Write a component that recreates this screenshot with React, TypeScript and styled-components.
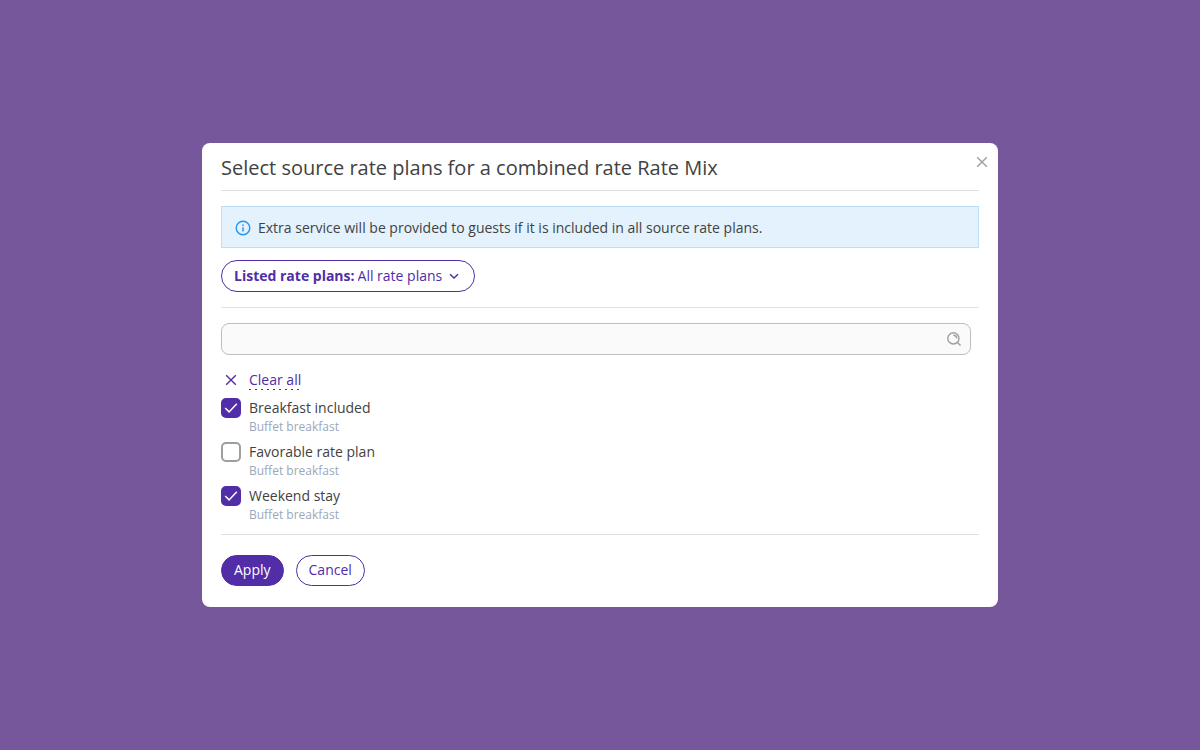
import React, { useState } from "react";
import styled, { createGlobalStyle } from "styled-components";

const PURPLE = "#512da8";
const TEXT = "#424242";

const GlobalStyle = createGlobalStyle`
  *, *::before, *::after { box-sizing: border-box; }
  body {
    margin: 0;
    background: #76579c;
    color: ${TEXT};
    font: 14px/20px "Open Sans", "Noto Sans", sans-serif;
  }
  button, input, select { font: inherit; color: inherit; }
`;

const Backdrop = styled.main`
  display: flex;
  align-items: center;
  justify-content: center;
  min-height: 100vh;
  padding: 16px;
`;

const Dialog = styled.section`
  position: relative;
  width: 100%;
  max-width: 796px;
  padding: 0 19px 21px;
  background: #fff;
  border-radius: 8px;
`;

const Title = styled.h1`
  margin: 0;
  padding: 11px 0 8px;
  font-size: 20px;
  font-weight: 400;
  line-height: 28px;
`;

const CloseButton = styled.button`
  position: absolute;
  top: 4px;
  right: 1px;
  display: flex;
  padding: 5px;
  border: 0;
  background: none;
  color: #9e9e9e;
  cursor: pointer;
`;

const Divider = styled.hr`
  height: 1px;
  margin: 0;
  border: 0;
  background: #e0e0e0;
`;

const Notice = styled.p`
  display: flex;
  align-items: center;
  gap: 7px;
  margin: 15px 0 12px;
  padding: 11px 13px 9px;
  border: 1px solid #bbdefb;
  background: #e3f2fd;
`;

const Filter = styled.label`
  display: inline-flex;
  align-items: center;
  height: 32px;
  margin-bottom: 15px;
  padding: 0 12px;
  border: 1px solid ${PURPLE};
  border-radius: 16px;
  color: ${PURPLE};
`;

const FilterName = styled.span`
  margin-right: 3px;
  font-weight: 700;
`;

const FilterSelect = styled.select`
  margin: 0 3px 0 0;
  padding: 0;
  border: 0;
  appearance: none;
  background: none;
  cursor: pointer;
`;

const FilterRow = styled.div`
  display: flex;
`;

const SearchBox = styled.div`
  display: flex;
  align-items: center;
  height: 32px;
  margin: 15px 8px 15px 0;
  padding: 0 8px;
  border: 1px solid #bdbdbd;
  border-radius: 8px;
  background: #fafafa;
  color: #9e9e9e;
`;

const SearchInput = styled.input`
  flex: 1;
  min-width: 0;
  border: 0;
  outline: 0;
  background: none;
  color: ${TEXT};
`;

const ClearButton = styled.button`
  display: flex;
  align-items: center;
  gap: 8px;
  padding: 0;
  border: 0;
  background: none;
  color: ${PURPLE};
  cursor: pointer;
`;

const ClearText = styled.span`
  height: 20px;
  background: repeating-linear-gradient(90deg, ${PURPLE} 0 2px, transparent 2px 6px) bottom / 100% 1px no-repeat;
`;

const PlanList = styled.ul`
  display: grid;
  gap: 6px;
  margin: 8px 0 10px;
  padding: 0;
  list-style: none;
`;

const Plan = styled.label`
  display: grid;
  grid-template-columns: 20px 1fr;
  column-gap: 8px;
`;

const CheckCell = styled.span`
  display: grid;
  & > * { grid-area: 1 / 1; }
`;

const Checkbox = styled.input`
  width: 20px;
  height: 20px;
  margin: 0;
  border: 2px solid #9e9e9e;
  border-radius: 5px;
  appearance: none;
  background: #fff;
  &:checked {
    border-color: ${PURPLE};
    background: ${PURPLE};
  }
`;

const PlanNote = styled.span`
  grid-column: 2;
  color: #9aa8bc;
  font-size: 12px;
  line-height: 18px;
`;

const Actions = styled.footer`
  display: flex;
  gap: 12px;
  padding-top: 20px;
`;

const ActionButton = styled.button<{ $primary?: boolean }>`
  height: 31px;
  padding: 0 12px 1px;
  border: 1px solid ${PURPLE};
  border-radius: 16px;
  background: ${(p) => (p.$primary ? PURPLE : "#fff")};
  color: ${(p) => (p.$primary ? "#fff" : PURPLE)};
  line-height: 20px;
  cursor: pointer;
`;

const Cross = ({ size }: { size: number }) => (
  <svg width={size} height={size} viewBox="0 0 20 20" fill="none" stroke="currentColor" strokeWidth="1.4" aria-hidden="true">
    <path d="M5.2 5.2l9.6 9.6M14.8 5.2l-9.6 9.6" />
  </svg>
);

const InfoIcon = () => (
  <svg width="16" height="16" viewBox="0 0 16 16" fill="none" stroke="#2196f3" aria-hidden="true">
    <circle cx="8" cy="8" r="6.8" strokeWidth="1.4" />
    <path d="M8 7.2v4.2" strokeWidth="1.5" />
    <path d="M8 4.4v1.5" strokeWidth="1.5" />
  </svg>
);

const Chevron = () => (
  <svg width="16" height="16" viewBox="0 0 16 16" fill="none" stroke="currentColor" strokeWidth="1.5" aria-hidden="true">
    <path d="M4 6.2l4 3.8 4-3.8" />
  </svg>
);

const SearchIcon = () => (
  <svg width="16" height="16" viewBox="0 0 16 16" fill="none" stroke="currentColor" strokeWidth="1.4" aria-hidden="true">
    <circle cx="7.4" cy="7.4" r="5.6" />
    <path d="M11.4 11.4l3.2 3.2M7.4 4.2a3.3 3.3 0 0 1 3.3 3.3" />
  </svg>
);

const Tick = () => (
  <svg width="20" height="20" viewBox="0 0 20 20" fill="none" stroke="#fff" strokeWidth="1.5" pointerEvents="none" aria-hidden="true">
    <path d="M4.2 10l3.9 3.9 7.7-8.2" />
  </svg>
);

const PLANS = ["Breakfast included", "Favorable rate plan", "Weekend stay"];

export default function App() {
  const [selected, setSelected] = useState<string[]>([PLANS[0], PLANS[2]]);
  const toggle = (name: string) =>
    setSelected((list) => (list.includes(name) ? list.filter((n) => n !== name) : [...list, name]));

  return (
    <>
      <GlobalStyle />
      <Backdrop>
        <Dialog role="dialog" aria-labelledby="dialog-title">
          <Title id="dialog-title">Select source rate plans for a combined rate Rate Mix</Title>
          <CloseButton type="button" aria-label="Close">
            <Cross size={20} />
          </CloseButton>
          <Divider />
          <Notice>
            <InfoIcon />
            Extra service will be provided to guests if it is included in all source rate plans.
          </Notice>
          <FilterRow>
            <Filter>
              <FilterName>Listed rate plans:</FilterName>
              <FilterSelect>
                <option>All rate plans</option>
              </FilterSelect>
              <Chevron />
            </Filter>
          </FilterRow>
          <Divider />
          <SearchBox>
            <SearchInput type="text" aria-label="Search rate plans" />
            <SearchIcon />
          </SearchBox>
          <ClearButton type="button" onClick={() => setSelected([])}>
            <Cross size={20} />
            <ClearText>Clear all</ClearText>
          </ClearButton>
          <PlanList>
            {PLANS.map((name) => (
              <li key={name}>
                <Plan>
                  <CheckCell>
                    <Checkbox type="checkbox" checked={selected.includes(name)} onChange={() => toggle(name)} />
                    {selected.includes(name) && <Tick />}
                  </CheckCell>
                  <span>{name}</span>
                  <PlanNote>Buffet breakfast</PlanNote>
                </Plan>
              </li>
            ))}
          </PlanList>
          <Divider />
          <Actions>
            <ActionButton type="button" $primary>Apply</ActionButton>
            <ActionButton type="button">Cancel</ActionButton>
          </Actions>
        </Dialog>
      </Backdrop>
    </>
  );
}
